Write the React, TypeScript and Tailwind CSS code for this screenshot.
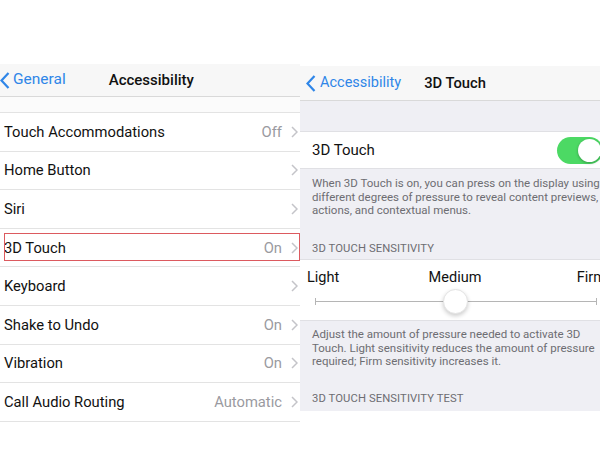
import React from "react";

const rows: { label: string; value?: string; boxed?: boolean }[] = [
  { label: "Touch Accommodations", value: "Off" },
  { label: "Home Button" },
  { label: "Siri" },
  { label: "3D Touch", value: "On", boxed: true },
  { label: "Keyboard" },
  { label: "Shake to Undo", value: "On" },
  { label: "Vibration", value: "On" },
  { label: "Call Audio Routing", value: "Automatic" },
];

function Chevron() {
  return (
    <svg width="7" height="12" viewBox="0 0 7 12" className="shrink-0">
      <path d="M1 1l5 5-5 5" fill="none" stroke="#c4c4c9" strokeWidth="1.5" />
    </svg>
  );
}

function BackChevron() {
  return (
    <svg width="10" height="17" viewBox="0 0 10 17" className="shrink-0">
      <path d="M8.5 1L1.5 8.5 8.5 16" fill="none" stroke="#2f86e8" strokeWidth="2.2" />
    </svg>
  );
}

function Toggle() {
  return (
    <div className="w-[46px] h-[27px] rounded-full bg-[#4cd964] p-[2px] flex justify-end shrink-0">
      <div className="w-[23px] h-[23px] rounded-full bg-white shadow-[0_1px_3px_rgba(0,0,0,0.3)]" />
    </div>
  );
}

function AccessibilityPanel() {
  return (
    <div className="w-[300px] shrink-0 bg-white">
      <div className="h-[33px] bg-[#f7f7f7] border-b border-[#d9d9d9] flex items-center">
        <BackChevron />
        <span className="ml-[3px] text-[15.5px] text-[#2f86e8]">General</span>
        <span className="ml-[43px] text-[15px] font-medium text-[#111]">Accessibility</span>
      </div>
      <div className="h-[15px] bg-[#fbfbfb]" />
      {rows.map((r) => (
        <div
          key={r.label}
          className="relative h-[38.6px] border-t border-[#e3e3e3] flex items-center pl-[4px] pr-[2px]"
        >
          <span className="text-[14.75px] text-[#111]">{r.label}</span>
          <span className="ml-auto mr-[9px] text-[14.75px] text-[#9a9a9f]">{r.value}</span>
          <Chevron />
          {r.boxed && (
            <div className="absolute left-[4px] right-0 top-[4px] bottom-[5px] border-[1.5px] border-[#dc5a5f]" />
          )}
        </div>
      ))}
      <div className="border-t border-[#e3e3e3] h-[29px]" />
    </div>
  );
}

function TouchPanel() {
  return (
    <div className="w-[300px] shrink-0 overflow-hidden mt-[2px]">
      <div className="w-[310px]">
        <div className="h-[35px] bg-[#f7f7f7] border-b border-[#d9d9d9] flex items-center pl-[6px]">
          <BackChevron />
          <span className="ml-[4px] text-[14.5px] text-[#2f86e8]">Accessibility</span>
          <span className="ml-[23px] text-[14.75px] font-medium text-[#111]">3D Touch</span>
        </div>
        <div className="h-[31px] bg-[#efeff4] border-b border-[#e0e0e4]" />
        <div className="h-[37px] bg-white flex items-center pl-[12px] pr-[7px] border-b border-[#e0e0e4]">
          <span className="text-[15px] text-[#111]">3D Touch</span>
          <span className="ml-auto">
            <Toggle />
          </span>
        </div>
        <div className="bg-[#efeff4] pl-[12px] pt-[8px] h-[90px] text-[11.5px] leading-[13.7px] text-[#6d6d72] whitespace-nowrap">
          <p>
            When 3D Touch is on, you can press on the display using
            <br />
            different degrees of pressure to reveal content previews,
            <br />
            actions, and contextual menus.
          </p>
          <p className="mt-[24px] text-[11.25px] tracking-[0.1px]">3D TOUCH SENSITIVITY</p>
        </div>
        <div className="h-[62px] bg-white border-y border-[#e0e0e4] pt-[7px]">
          <div className="grid grid-cols-[1fr_auto_1fr] text-[14.5px] text-[#111]">
            <span className="justify-self-start ml-[7px]">Light</span>
            <span>Medium</span>
            <span className="justify-self-end mr-[4px]">Firm</span>
          </div>
          <div className="relative mt-[0px] ml-[15px] mr-[13px] h-[25px] flex items-center">
            <div className="w-[1px] h-[7px] bg-[#b5b5b5]" />
            <div className="flex-1 h-[1px] bg-[#b5b5b5]" />
            <div className="w-[1px] h-[7px] bg-[#b5b5b5]" />
            <div className="absolute left-[128px] top-0 w-[25px] h-[25px] rounded-full bg-white border border-[#e4e4e4] shadow-[0_2px_4px_rgba(0,0,0,0.2)]" />
          </div>
        </div>
        <div className="bg-[#efeff4] pl-[12px] pt-[7px] h-[90px] text-[11.5px] leading-[13.7px] text-[#6d6d72] whitespace-nowrap">
          <p>
            Adjust the amount of pressure needed to activate 3D
            <br />
            Touch. Light sensitivity reduces the amount of pressure
            <br />
            required; Firm sensitivity increases it.
          </p>
          <p className="mt-[23px] text-[11.25px] tracking-[0.1px]">3D TOUCH SENSITIVITY TEST</p>
        </div>
      </div>
    </div>
  );
}

export default function App() {
  return (
    <div className="w-[600px] h-[449px] bg-white overflow-hidden font-['Roboto','Liberation_Sans',sans-serif]">
      <div className="h-[64px]" />
      <div className="flex items-start">
        <AccessibilityPanel />
        <TouchPanel />
      </div>
    </div>
  );
}
